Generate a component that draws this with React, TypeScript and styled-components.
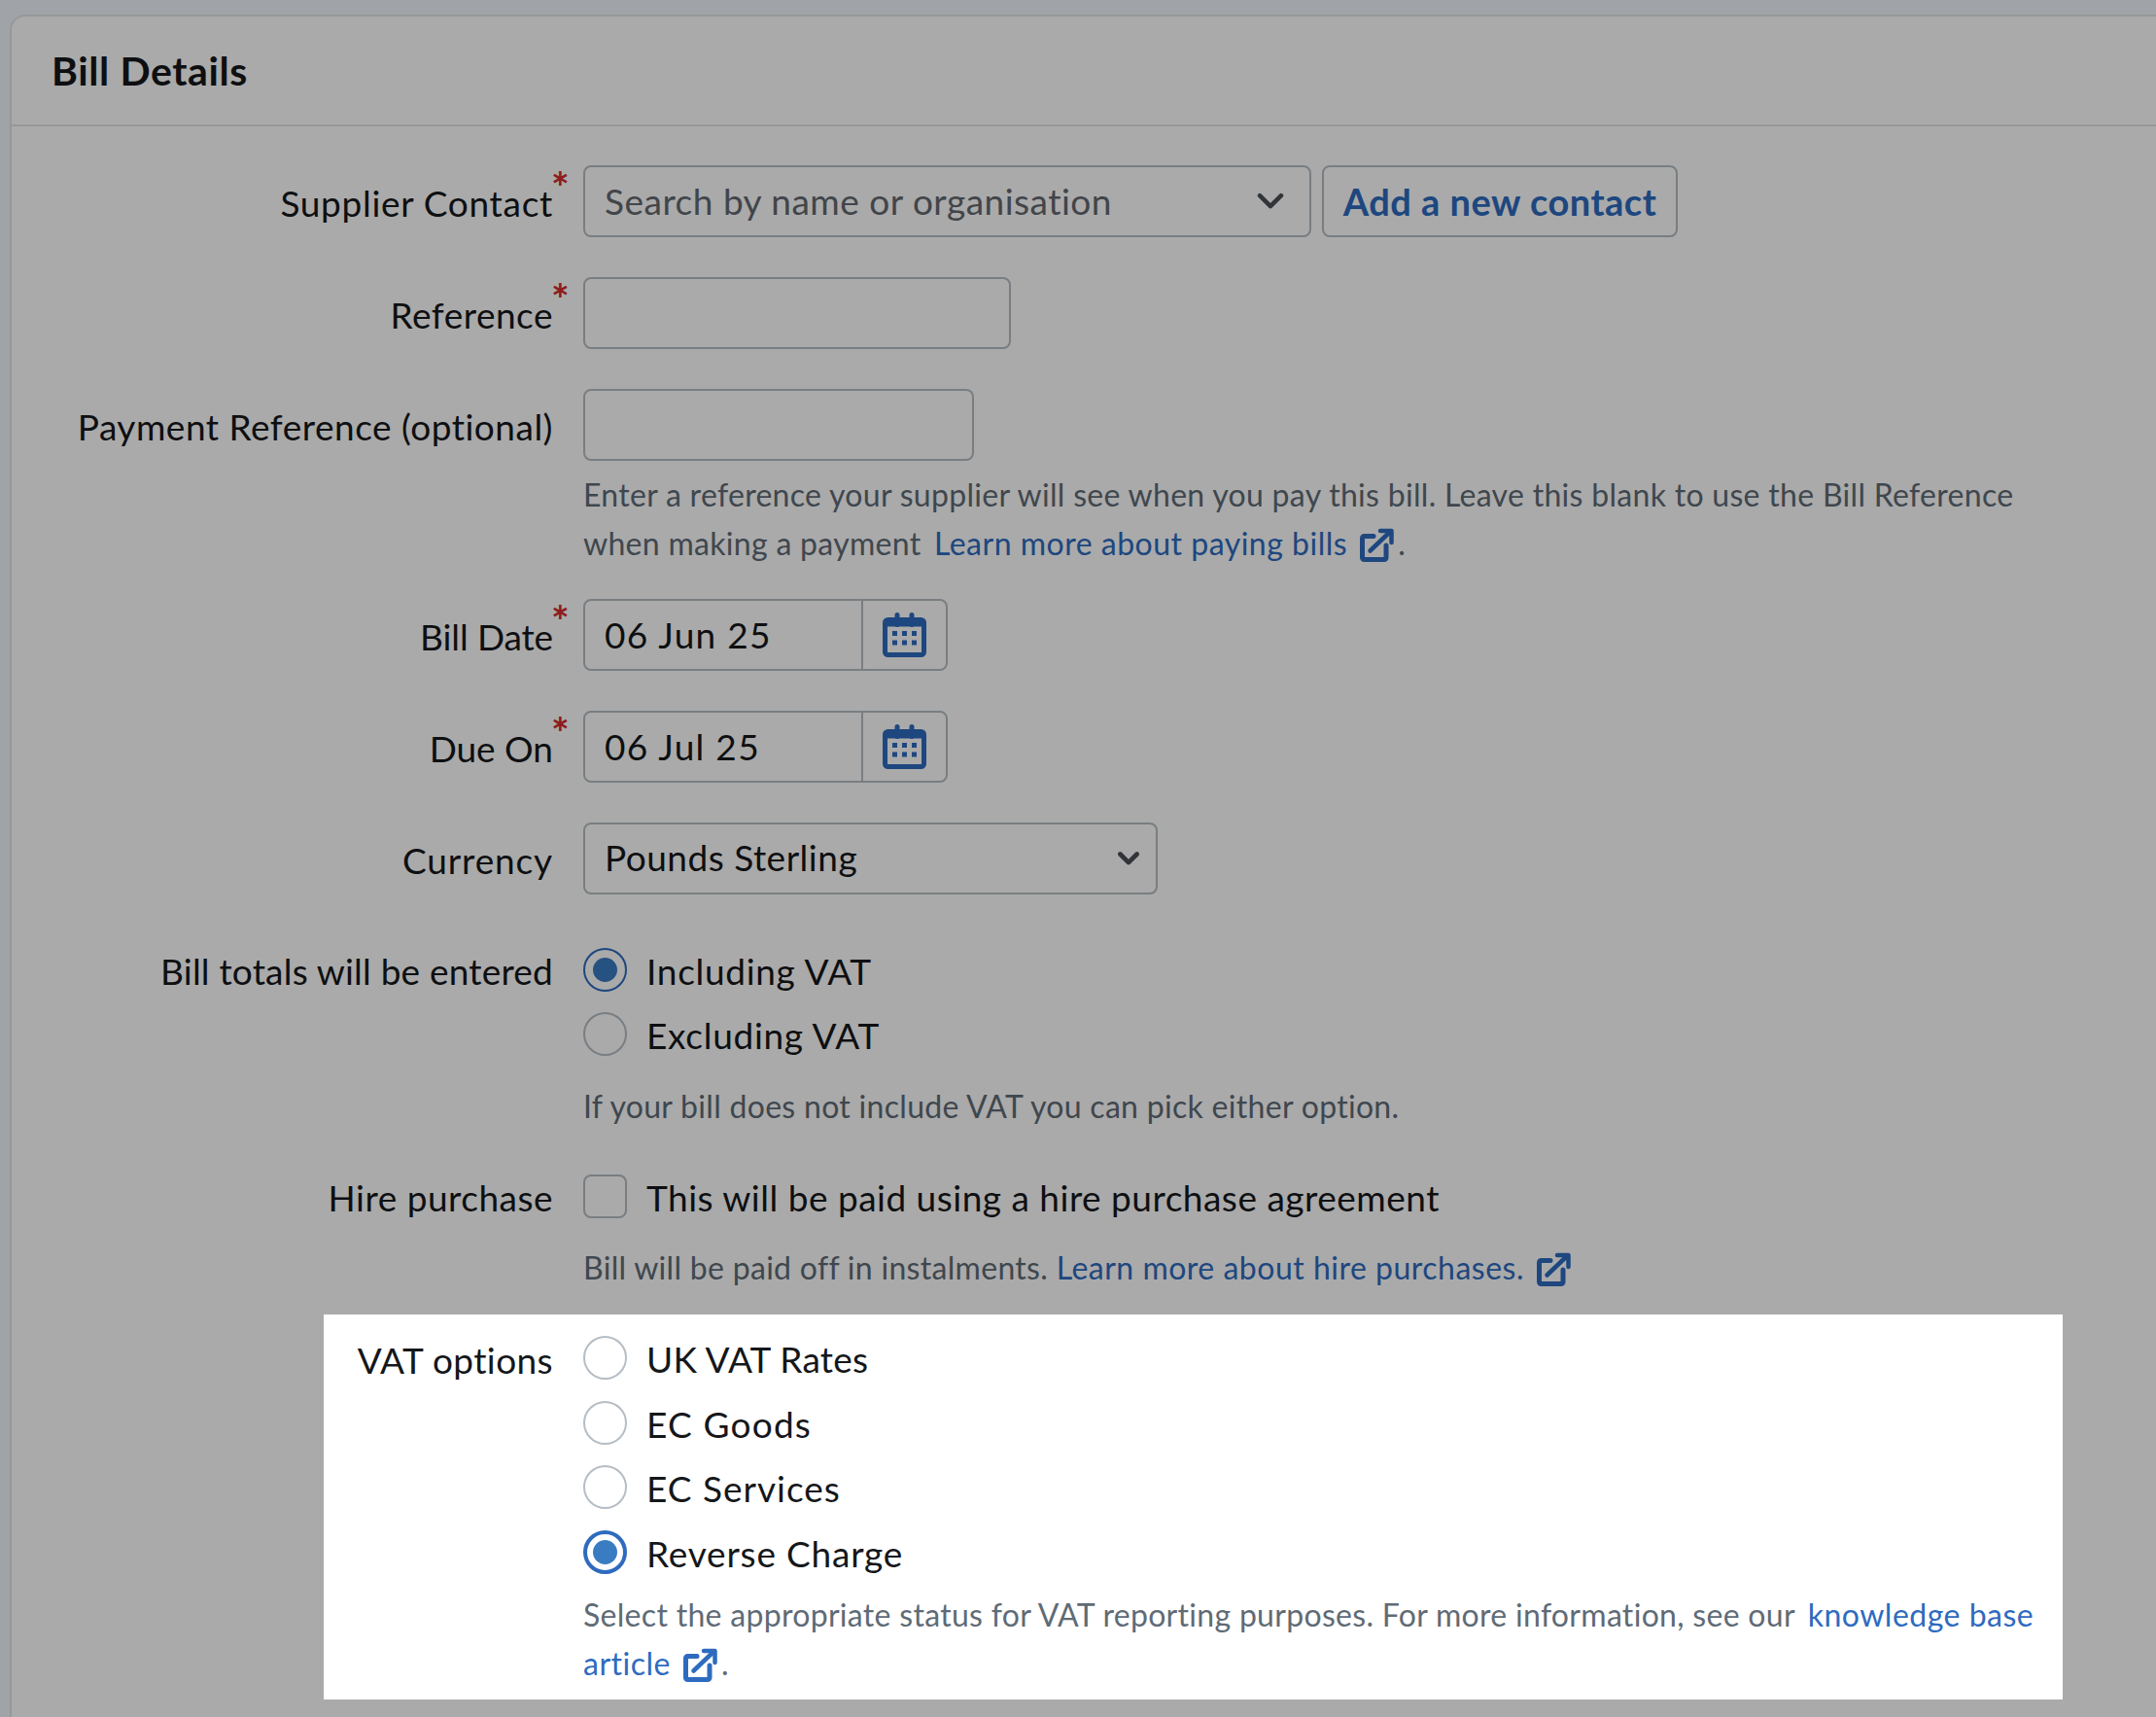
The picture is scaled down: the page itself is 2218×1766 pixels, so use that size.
import React from "react";
import styled, { createGlobalStyle } from "styled-components";

const Global = createGlobalStyle`
  html, body { margin: 0; padding: 0; height: 1766px; overflow: hidden; background: #f0f5fb; }
  body { font-family: "Lato", "Liberation Sans", sans-serif; color: #15171a; }
  #root { height: 1766px; overflow: hidden; }
`;

const Card = styled.section`
  margin: 15px 0 0 10px;
  width: 2320px;
  height: 1800px;
  background: #fff;
  border-top: 2px solid #e1e4e8;
  border-left: 2px solid #e1e4e8;
  border-top-left-radius: 16px;
  box-sizing: border-box;
`;
const CardHeader = styled.header`
  height: 111px;
  border-bottom: 2px solid #e1e4e8;
  padding-left: 41px;
  display: flex;
  align-items: center;
`;
const Title = styled.h2`
  margin: 0;
  font-size: 41px;
  letter-spacing: 0.6px;
  font-weight: 700;
  color: #15171a;
`;
const Body = styled.div`
  padding-top: 40px;
`;
const Row = styled.div<{ $after?: number }>`
  display: grid;
  grid-template-columns: 557px 1fr;
  column-gap: 31px;
  align-items: start;
  margin-bottom: ${(p) => p.$after ?? 41}px;
`;
const Label = styled.label<{ $h?: number; $ls?: number }>`
  justify-self: end;
  position: relative;
  box-sizing: border-box;
  height: ${(p) => p.$h ?? 74}px;
  font-size: 37px;
  letter-spacing: ${(p) => p.$ls ?? 0.5}px;
  line-height: ${(p) => (p.$h ?? 74) + 3}px;
  white-space: nowrap;
`;
const Req = styled.span`
  position: absolute;
  left: calc(100% - 2px);
  top: 0;
  font-size: 44px;
  line-height: 44px;
  font-weight: 700;
  color: #d42a2a;
`;
const Fields = styled.div`
  display: flex;
  flex-direction: column;
  align-items: flex-start;
`;
const Inline = styled.div`
  display: flex;
  gap: 11px;
`;
const Box = styled.div<{ $w: number; $pr?: number }>`
  width: ${(p) => p.$w}px;
  height: 74px;
  box-sizing: border-box;
  border: 2px solid #b6bdc4;
  border-radius: 8px;
  display: flex;
  align-items: center;
  padding: 0 ${(p) => p.$pr ?? 21}px 0 20px;
  font-size: 37px;
  letter-spacing: 0.5px;
  color: #15171a;
  white-space: nowrap;
`;
const Placeholder = styled.span`
  flex: 1;
  color: #63686f;
  padding-bottom: 1px;
`;
const Value = styled.span`
  flex: 1;
  color: #15171a;
  padding-bottom: 3px;
`;
const AddButton = styled.button`
  width: 366px;
  height: 74px;
  box-sizing: border-box;
  border: 2px solid #b6bdc4;
  border-radius: 8px;
  background: transparent;
  font: 700 38px "Lato", sans-serif;
  letter-spacing: 0.5px;
  color: #2e6bbf;
  padding: 0;
`;
const DateBox = styled.div`
  width: 375px;
  height: 74px;
  box-sizing: border-box;
  border: 2px solid #b6bdc4;
  border-radius: 8px;
  display: flex;
`;
const DateText = styled.div`
  width: 286px;
  box-sizing: border-box;
  padding-left: 20px;
  font-size: 37px;
  letter-spacing: 1.3px;
  line-height: 70px;
  border-right: 2px solid #b6bdc4;
`;
const DateIcon = styled.div`
  flex: 1;
  display: flex;
  align-items: center;
  justify-content: center;
`;
const Help = styled.p<{ $top?: number }>`
  margin: ${(p) => p.$top ?? 0}px 0 0;
  font-size: 32px;
  letter-spacing: 0.3px;
  line-height: 50px;
  color: #5f6b76;
  white-space: nowrap;
`;
const Link = styled.a<{ $ml?: number }>`
  color: #2e6bbf;
  letter-spacing: 0.5px;
  margin-left: ${(p) => p.$ml ?? 0}px;
`;
const ExtIcon = styled.svg`
  width: 35px;
  height: 35px;
  vertical-align: -7px;
  margin-left: 13px;
  margin-right: 4px;
`;
const OptionList = styled.div`
  display: flex;
  flex-direction: column;
  gap: 22px;
`;
const Option = styled.div`
  display: flex;
  align-items: center;
  gap: 20px;
  height: 44.5px;
  font-size: 37px;
  line-height: 44px;
`;
const OptionText = styled.span<{ $ls?: number }>`
  padding-top: 3px;
  letter-spacing: ${(p) => p.$ls ?? 0.5}px;
`;
const Radio = styled.span<{ $on?: boolean; $focus?: boolean }>`
  width: 45px;
  height: 45px;
  box-sizing: border-box;
  border-radius: 50%;
  border: ${(p) => (p.$focus ? 4 : 2)}px solid ${(p) => (p.$on ? "#2e6bbf" : "#b6bdc4")};
  display: flex;
  align-items: center;
  justify-content: center;
  &::after {
    content: "";
    display: ${(p) => (p.$on ? "block" : "none")};
    width: 25px;
    height: 25px;
    border-radius: 50%;
    background: #3a7cc2;
  }
`;
const Check = styled.span`
  width: 45px;
  height: 45px;
  box-sizing: border-box;
  border-radius: 8px;
  border: 2px solid #b6bdc4;
`;
const Spotlight = styled.div`
  position: relative;
  z-index: 1;
  margin-left: 321px;
  width: 1789px;
  height: 396px;
  box-sizing: border-box;
  padding-top: 23px;
  background: #fff;
  box-shadow: 0 0 0 3000px rgba(0, 0, 0, 0.333);
  display: grid;
  grid-template-columns: 236px 1fr;
  column-gap: 31px;
  align-items: start;
`;

const Chevron = ({ w, sw }: { w: number; sw: number }) => (
  <svg width={w} height={w * 0.62} viewBox="0 0 28 17.400" fill="none">
    <path d="M3 3.200l11 11 11-11" stroke="#4a4e54" strokeWidth={sw} strokeLinecap="round" strokeLinejoin="round" />
  </svg>
);

const Calendar = () => (
  <svg width="45" height="46" viewBox="0 0 45 46" fill="none">
    <rect x="2.500" y="7.500" width="40" height="36" rx="3" stroke="#2e6bbf" strokeWidth="5" />
    <path d="M2.500 12h40" stroke="#2e6bbf" strokeWidth="5" />
    <path d="M15 2.500v10M30 2.500v10" stroke="#2e6bbf" strokeWidth="5" strokeLinecap="round" />
    <path d="M10 19h5v5h-5zM20 19h5v5h-5zM30 19h5v5h-5zM10 28.500h5v5h-5zM20 28.500h5v5h-5zM30 28.500h5v5h-5z" fill="#2e6bbf" />
  </svg>
);

const External = () => (
  <ExtIcon viewBox="0 0 35 35" fill="none">
    <path d="M14 8.500H4.500a2 2 0 0 0-2 2V30.500a2 2 0 0 0 2 2H25a2 2 0 0 0 2-2V18" stroke="#2e6bbf" strokeWidth="5" strokeLinecap="round" />
    <path d="M10.500 23.500L31 4" stroke="#2e6bbf" strokeWidth="4.500" strokeLinecap="round" />
    <path d="M21 3H32.500V15" stroke="#2e6bbf" strokeWidth="4.500" strokeLinecap="round" strokeLinejoin="round" />
  </ExtIcon>
);

export default function App() {
  return (
    <>
      <Global />
      <Card>
        <CardHeader>
          <Title>Bill Details</Title>
        </CardHeader>
        <Body>
          <Row>
            <Label $ls={0.7}>Supplier Contact<Req>*</Req></Label>
            <Inline>
              <Box $w={749} $pr={26}>
                <Placeholder>Search by name or organisation</Placeholder>
                <Chevron w={28} sw={4.500} />
              </Box>
              <AddButton>Add a new contact</AddButton>
            </Inline>
          </Row>
          <Row>
            <Label>Reference<Req>*</Req></Label>
            <Box $w={440} />
          </Row>
          <Row $after={32}>
            <Label>Payment Reference (optional)</Label>
            <Fields>
              <Box $w={402} />
              <Help $top={10}>
                Enter a reference your supplier will see when you pay this bill. Leave this blank to use the Bill Reference
                <br />
                when making a payment <Link $ml={5}>Learn more about paying bills<External /></Link>.
              </Help>
            </Fields>
          </Row>
          <Row>
            <Label $ls={-0.1}>Bill Date<Req>*</Req></Label>
            <DateBox>
              <DateText>06 Jun 25</DateText>
              <DateIcon><Calendar /></DateIcon>
            </DateBox>
          </Row>
          <Row>
            <Label $ls={0}>Due On<Req>*</Req></Label>
            <DateBox>
              <DateText>06 Jul 25</DateText>
              <DateIcon><Calendar /></DateIcon>
            </DateBox>
          </Row>
          <Row $after={55}>
            <Label $ls={0.85}>Currency</Label>
            <Box $w={591} $pr={17}>
              <Value>Pounds Sterling</Value>
              <Chevron w={22} sw={6} />
            </Box>
          </Row>
          <Row $after={45}>
            <Label $h={44} $ls={0.2}>Bill totals will be entered</Label>
            <Fields>
              <OptionList>
                <Option><Radio $on /><OptionText $ls={0.7}>Including VAT</OptionText></Option>
                <Option><Radio /><OptionText $ls={0.7}>Excluding VAT</OptionText></Option>
              </OptionList>
              <Help $top={27}>If your bill does not include VAT you can pick either option.</Help>
            </Fields>
          </Row>
          <Row $after={23}>
            <Label $h={44}>Hire purchase</Label>
            <Fields>
              <Option><Check /><OptionText>This will be paid using a hire purchase agreement</OptionText></Option>
              <Help $top={26}>
                Bill will be paid off in instalments. <Link>Learn more about hire purchases.<External /></Link>
              </Help>
            </Fields>
          </Row>
          <Spotlight>
            <Label $h={44} $ls={0.4}>VAT options</Label>
            <Fields>
              <OptionList>
                <Option><Radio /><OptionText $ls={0.25}>UK VAT Rates</OptionText></Option>
                <Option><Radio /><OptionText $ls={1.2}>EC Goods</OptionText></Option>
                <Option><Radio /><OptionText $ls={1}>EC Services</OptionText></Option>
                <Option><Radio $on $focus /><OptionText $ls={0.8}>Reverse Charge</OptionText></Option>
              </OptionList>
              <Help $top={17}>
                Select the appropriate status for VAT reporting purposes. For more information, see our <Link $ml={5}>knowledge base</Link>
                <br />
                <Link>article<External /></Link>.
              </Help>
            </Fields>
          </Spotlight>
        </Body>
      </Card>
    </>
  );
}
